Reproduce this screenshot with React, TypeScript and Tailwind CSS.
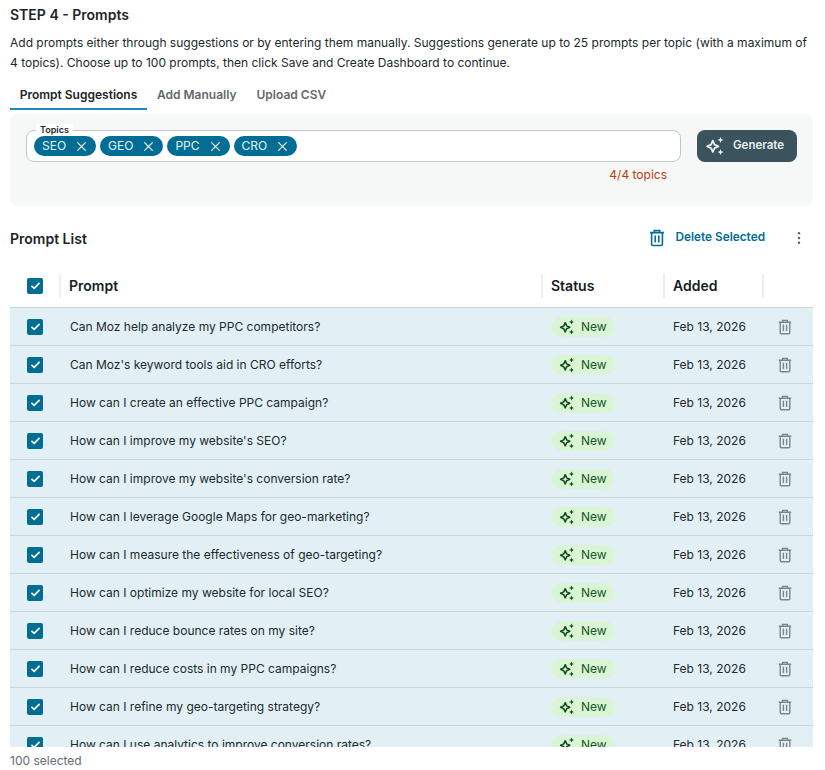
const font = { fontFamily: 'Inter, sans-serif' }

const prompts = [
  'Can Moz help analyze my PPC competitors?',
  "Can Moz's keyword tools aid in CRO efforts?",
  'How can I create an effective PPC campaign?',
  "How can I improve my website's SEO?",
  "How can I improve my website's conversion rate?",
  'How can I leverage Google Maps for geo-marketing?',
  'How can I measure the effectiveness of geo-targeting?',
  'How can I optimize my website for local SEO?',
  'How can I reduce bounce rates on my site?',
  'How can I reduce costs in my PPC campaigns?',
  'How can I refine my geo-targeting strategy?',
  'How can I use analytics to improve conversion rates?',
]

function Sparkles({ className }: { className?: string }) {
  return (
    <svg viewBox="0 0 20 20" className={className} fill="none">
      <path d="M8 5.2 9.6 8.7 13.1 10.3 9.6 11.9 8 15.4 6.4 11.9 2.9 10.3 6.4 8.7Z" stroke="currentColor" strokeWidth="1.7" strokeLinejoin="round" />
      <path d="M15 1.8 15.8 3.7 17.7 4.5 15.8 5.3 15 7.2 14.2 5.3 12.3 4.5 14.2 3.7Z" fill="currentColor" />
      <path d="M15 12.8 15.8 14.7 17.7 15.5 15.8 16.3 15 18.2 14.2 16.3 12.3 15.5 14.2 14.7Z" fill="currentColor" />
    </svg>
  )
}

function Trash({ className }: { className?: string }) {
  return (
    <svg viewBox="0 0 16 16" className={className} fill="none" stroke="currentColor" strokeWidth="1.4">
      <path d="M1.8 3.2h12.4M5.6 3V1.4h4.8V3" />
      <path d="M3.2 3.4v10.1c0 .7.5 1.2 1.2 1.2h7.2c.7 0 1.2-.5 1.2-1.2V3.4" />
      <path d="M6.4 5.8v6.2M9.6 5.8v6.2" />
    </svg>
  )
}

function Check() {
  return (
    <span className="flex h-4 w-4 items-center justify-center rounded-[2px] bg-[#006d94]">
      <svg viewBox="0 0 16 16" className="h-[13px] w-[13px]" fill="none" stroke="white" strokeWidth="2">
        <path d="M3 8.4 6.4 11.6 13 4.8" />
      </svg>
    </span>
  )
}

function Chip({ label }: { label: string }) {
  return (
    <span className="flex h-5 items-center gap-[10px] rounded-full bg-[#006d94] pl-2 pr-[9px] text-[12px] text-[#e6f2f6]">
      {label}
      <svg viewBox="0 0 12 12" className="h-[11px] w-[11px]" stroke="white" strokeWidth="1.3">
        <path d="M1.5 1.5 10.5 10.5M10.5 1.5 1.5 10.5" />
      </svg>
    </span>
  )
}

function HeadCell({ label }: { label?: string }) {
  return (
    <div className="flex h-6 items-center border-l-2 border-[#eceeee] pl-2 text-[14px] font-semibold text-[#151e22]">
      {label}
    </div>
  )
}

export default function App() {
  return (
    <div className="h-[770px] overflow-hidden bg-white px-[10px] pt-[7px] text-[#1b2529]" style={font}>
      <h2 className="text-[14px] font-semibold leading-4">STEP 4 - Prompts</h2>
      <p className="mt-[10px] w-[803px] text-[12px] leading-5 text-[#20292d]">
        Add prompts either through suggestions or by entering them manually. Suggestions generate up to 25 prompts per topic (with a maximum of 4 topics). Choose up to 100 prompts, then click Save and Create Dashboard to continue.
      </p>

      <div className="mt-[7px] flex h-[30px] items-center text-[12px] font-semibold text-[#62696c]">
        <div className="flex h-[30px] w-[137px] items-center justify-center border-y-2 border-t-transparent border-b-[#1f88b8] text-[#1b2529]">Prompt Suggestions</div>
        <div className="ml-[10px]">Add Manually</div>
        <div className="ml-[20px]">Upload CSV</div>
      </div>

      <section className="mt-1 flex h-[92px] w-[803px] gap-4 rounded-lg bg-[#f6f8f8] pl-4 pr-4 pt-4">
        <div className="w-[655px]">
          <div className="relative flex h-8 items-center gap-[4px] rounded-lg border border-[#c2c6c7] bg-white pl-[7px]">
            <span className="absolute -top-[7px] left-[9px] bg-white px-1 text-[9px] font-semibold leading-[11px] text-[#1b2529]">Topics</span>
            <Chip label="SEO" />
            <Chip label="GEO" />
            <Chip label="PPC" />
            <Chip label="CRO" />
          </div>
          <div className="mt-[5px] pr-[14px] text-right text-[12px] leading-4 text-[#bf3a0e]">4/4 topics</div>
        </div>
        <button className="flex h-8 w-[100px] items-center gap-[7px] rounded-lg bg-[#3b535c] pl-[7px] text-[11.5px] font-semibold text-[#e8eeef]">
          <Sparkles className="h-[22px] w-[22px]" />
          Generate
        </button>
      </section>

      <div className="mt-[16px] flex h-8 w-[803px] items-center">
        <h3 className="text-[14px] font-semibold text-[#1b2529]">Prompt List</h3>
        <div className="ml-auto flex items-center gap-[9px] text-[11.8px] font-semibold text-[#006d94]">
          <Trash className="h-[18px] w-[18px]" />
          Delete Selected
        </div>
        <svg viewBox="0 0 4 16" className="ml-[32px] mr-[12px] h-[14px] w-[4px] text-[#5d6669]" fill="currentColor">
          <circle cx="2" cy="2.5" r="1.4" />
          <circle cx="2" cy="8" r="1.4" />
          <circle cx="2" cy="13.5" r="1.4" />
        </svg>
      </div>

      <div className="mt-[16px] h-[477px] w-[803px] overflow-hidden">
        <div className="grid h-[38px] grid-cols-[49px_482px_122px_99px_51px] items-center border-b border-[#c7d6dc] pb-[6px]">
          <div className="pl-[17px]"><Check /></div>
          <HeadCell label="Prompt" />
          <HeadCell label="Status" />
          <HeadCell label="Added" />
          <HeadCell />
        </div>
        {prompts.map((prompt) => (
          <div key={prompt} className="grid h-[38px] grid-cols-[49px_482px_122px_99px_51px] items-center border-b border-[#c7d6dc] bg-[#e2f0f5] text-[12px] text-[#20292d]">
            <div className="pl-[17px]"><Check /></div>
            <div className="pl-[11px]">{prompt}</div>
            <div className="pl-[10px]">
              <span className="flex h-5 w-[64px] items-center gap-[5px] rounded-full bg-[#d9f5d6] pl-[7px] text-[#17561f]">
                <Sparkles className="h-[18px] w-[18px] text-[#14491c]" />
                New
              </span>
            </div>
            <div className="pl-[10px]">Feb 13, 2026</div>
            <div className="pl-[15px]"><Trash className="h-4 w-4 text-[#7c8588]" /></div>
          </div>
        ))}
      </div>
      <div className="mt-[6px] text-[12px] leading-4 text-[#666d70]">100 selected</div>
    </div>
  )
}
